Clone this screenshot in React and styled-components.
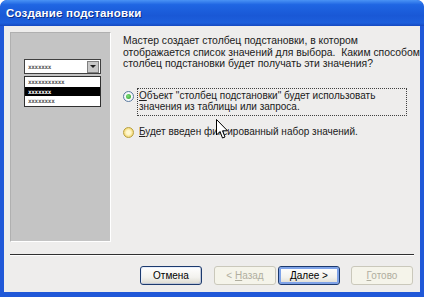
import styled, { createGlobalStyle } from 'styled-components';

const GlobalStyle = createGlobalStyle`
  html, body {
    margin: 0;
    padding: 0;
    background: #ffffff;
  }
  * {
    box-sizing: border-box;
  }
`;

const Window = styled.div`
  width: 424px;
  height: 297px;
  display: flex;
  flex-direction: column;
  background: #2058d8;
  border-radius: 7px 7px 0 0;
  padding: 0 4px 5px 4px;
  font-family: "Liberation Sans", Arial, sans-serif;
  overflow: hidden;
`;

const TitleBar = styled.div`
  height: 27px;
  margin: 0 -4px;
  padding: 0 6px;
  display: flex;
  align-items: center;
  border-radius: 7px 7px 0 0;
  background: linear-gradient(180deg, #4a93f5 0%, #1f66e3 18%, #1958d6 60%, #1d5fdc 88%, #1548c0 100%);
  color: #ffffff;
  font-family: "Liberation Sans", Arial, sans-serif;
  font-weight: bold;
  font-size: 11.5px;
  letter-spacing: 0.2px;
  text-shadow: 1px 1px 0 #0c2f8a;
`;

const Body = styled.div`
  flex: 1;
  display: flex;
  flex-direction: column;
  background: #eeedec;
  padding: 6px 7px 7px 6px;
`;

const Content = styled.div`
  display: flex;
  gap: 12px;
  height: 210px;
`;

const Panel = styled.div`
  width: 101px;
  flex-shrink: 0;
  background: #c4c4c4;
  border-top: 1px solid #b0b0b0;
  border-left: 1px solid #b0b0b0;
  border-right: 1px solid #ffffff;
  border-bottom: 1px solid #ffffff;
  padding: 26px 9px 0 13px;
`;

const Combo = styled.div`
  height: 15px;
  display: flex;
  align-items: center;
  background: #ffffff;
  border: 1px solid #404040;
  padding-left: 3px;
`;

const Xs = styled.span`
  flex: 1;
  font-family: "DejaVu Sans Mono", monospace;
  font-size: 6px;
  font-weight: bold;
  letter-spacing: -0.3px;
  color: ${(p) => (p.$light ? '#ffffff' : '#555555')};
`;

const DropButton = styled.div`
  width: 12px;
  height: 12px;
  margin-right: 1px;
  background: #c8c8c8;
  border: 1px solid #808080;
  display: flex;
  align-items: center;
  justify-content: center;
`;

const Triangle = styled.div`
  width: 0;
  height: 0;
  border-left: 3px solid transparent;
  border-right: 3px solid transparent;
  border-top: 3px solid #202020;
`;

const List = styled.div`
  margin-top: 2px;
  border: 1px solid #303030;
  background: #ffffff;
  display: flex;
  flex-direction: column;
`;

const ListItem = styled.div`
  height: 9.5px;
  display: flex;
  align-items: center;
  padding-left: 3px;
  background: ${(p) => (p.$selected ? '#000000' : '#ffffff')};
`;

const Right = styled.div`
  flex: 1;
  display: flex;
  flex-direction: column;
  padding-top: 3px;
  position: relative;
`;

const Intro = styled.p`
  margin: 0;
  font-size: 10.4px;
  line-height: 11.5px;
  color: #202020;
  white-space: nowrap;
`;

const Options = styled.div`
  margin-top: 18px;
  display: flex;
  flex-direction: column;
  gap: 10px;
`;

const Option = styled.div`
  display: flex;
  align-items: flex-start;
  gap: 3px;
`;

const Radio = styled.div`
  width: 11px;
  height: 11px;
  margin-top: ${(p) => (p.$focused ? '3px' : '1px')};
  flex-shrink: 0;
  border-radius: 50%;
  border: 1px solid ${(p) => (p.$hover ? '#b8a040' : '#5a7aa0')};
  background: ${(p) => (p.$hover ? 'radial-gradient(circle, #fff8d0 30%, #f3d770 75%)' : 'radial-gradient(circle, #ffffff 40%, #dfe6ee 100%)')};
  display: flex;
  align-items: center;
  justify-content: center;
`;

const Dot = styled.div`
  width: 5px;
  height: 5px;
  border-radius: 50%;
  background: radial-gradient(circle at 40% 40%, #7ee07a, #2a9a2a);
`;

const OptionLabel = styled.div`
  font-size: 10px;
  line-height: 11.5px;
  color: #202020;
  white-space: nowrap;
  padding: ${(p) => (p.$focused ? '1px 1px 2px 1px' : '0 2px')};
  border: ${(p) => (p.$focused ? '1px dotted #404040' : 'none')};
  width: ${(p) => (p.$focused ? '270px' : 'auto')};
`;

const Cursor = styled.svg`
  position: absolute;
  left: 93px;
  top: 87px;
`;

const Separator = styled.div`
  margin-top: 12px;
  height: 2px;
  border-top: 1px solid #303030;
  border-bottom: 1px solid #ffffff;
  margin-right: -1px;
`;

const ButtonRow = styled.div`
  margin-top: 10px;
  display: flex;
  justify-content: flex-end;
`;

const Button = styled.button`
  width: 62px;
  height: 19px;
  margin-left: ${(p) => p.$gap}px;
  padding: 0;
  font-family: "Liberation Sans", Arial, sans-serif;
  font-size: 10px;
  border-radius: 3px;
  color: ${(p) => (p.disabled ? '#b0ae9f' : '#000000')};
  border: 1px solid ${(p) => (p.disabled ? '#cac8bb' : '#1c3a6e')};
  background: ${(p) => (p.disabled ? '#f5f4ea' : 'linear-gradient(180deg, #ffffff 0%, #f3f2ee 60%, #dcdad0 100%)')};
  box-shadow: ${(p) => (p.$default ? 'inset 0 0 0 2px #7fa3e8' : p.disabled ? 'none' : 'inset -1px -1px 0 #c0c8d8, inset 1px 1px 0 #e8eefa')};
`;

const Key = styled.span`
  text-decoration: underline;
`;

const App = () => {
  return (
    <>
      <GlobalStyle />
      <Window>
        <TitleBar>Создание подстановки</TitleBar>
        <Body>
          <Content>
            <Panel>
              <Combo>
                <Xs>xxxxxxx</Xs>
                <DropButton>
                  <Triangle />
                </DropButton>
              </Combo>
              <List>
                <ListItem><Xs>xxxxxxxxxxx</Xs></ListItem>
                <ListItem $selected><Xs $light>xxxxxxx</Xs></ListItem>
                <ListItem><Xs>xxxxxxxx</Xs></ListItem>
              </List>
            </Panel>
            <Right>
              <Intro>
                Мастер создает столбец подстановки, в котором
                <br />
                отображается список значений для выбора.&nbsp; Каким способом
                <br />
                столбец подстановки будет получать эти значения?
              </Intro>
              <Options>
                <Option>
                  <Radio $focused>
                    <Dot />
                  </Radio>
                  <OptionLabel $focused>
                    <Key>О</Key>бъект "столбец подстановки" будет использовать
                    <br />
                    значения из таблицы или запроса.
                  </OptionLabel>
                </Option>
                <Option>
                  <Radio $hover />
                  <OptionLabel>
                    <Key>Б</Key>удет введен фиксированный набор значений.
                  </OptionLabel>
                </Option>
              </Options>
              <Cursor width="13" height="21" viewBox="0 0 13 21">
                <path d="M0.5 0.5 L0.5 16 L4 12.5 L6.5 19 L9 18 L6.5 11.8 L11.5 11.8 Z" fill="#ffffff" stroke="#000000" strokeWidth="1" strokeLinejoin="miter" />
              </Cursor>
            </Right>
          </Content>
          <Separator />
          <ButtonRow>
            <Button $gap={0}>Отмена</Button>
            <Button $gap={12} disabled>&lt; <Key>Н</Key>азад</Button>
            <Button $gap={2} $default>
              <Key>Д</Key>алее &gt;
            </Button>
            <Button $gap={11} disabled><Key>Г</Key>отово</Button>
          </ButtonRow>
        </Body>
      </Window>
    </>
  );
};

export default App;
